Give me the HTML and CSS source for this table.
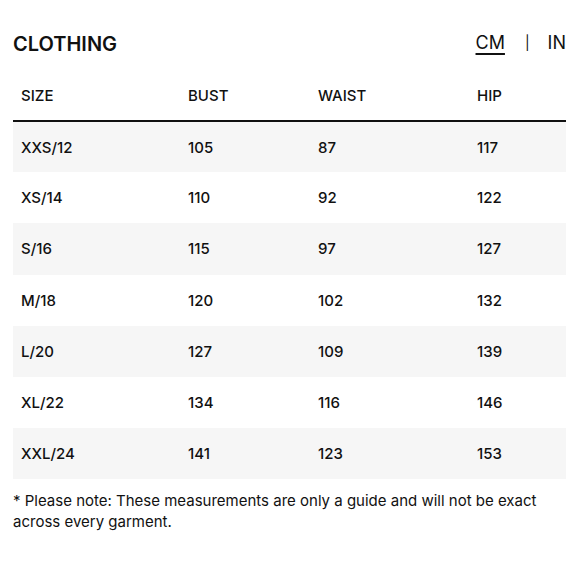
FILE: index.html
```html
<!DOCTYPE html>
<html lang="en">
<head>
<meta charset="utf-8">
<link rel="stylesheet" href="styles.css">
</head>
<body>
<div class="chart">
  <div class="top">
    <h2 class="title">CLOTHING</h2>
    <div class="units">
      <span class="unit active">CM</span>
      <span class="sep">|</span>
      <span class="unit">IN</span>
    </div>
  </div>
  <table class="sizes">
    <colgroup>
      <col class="c1"><col class="c2"><col class="c3"><col class="c4">
    </colgroup>
    <thead>
      <tr><th>SIZE</th><th>BUST</th><th>WAIST</th><th>HIP</th></tr>
    </thead>
    <tbody>
      <tr><td>XXS/12</td><td>105</td><td>87</td><td>117</td></tr>
      <tr><td>XS/14</td><td>110</td><td>92</td><td>122</td></tr>
      <tr><td>S/16</td><td>115</td><td>97</td><td>127</td></tr>
      <tr><td>M/18</td><td>120</td><td>102</td><td>132</td></tr>
      <tr><td>L/20</td><td>127</td><td>109</td><td>139</td></tr>
      <tr><td>XL/22</td><td>134</td><td>116</td><td>146</td></tr>
      <tr><td>XXL/24</td><td>141</td><td>123</td><td>153</td></tr>
    </tbody>
  </table>
  <p class="note">* Please note: These measurements are only a guide and will not be exact across every garment.</p>
</div>
</body>
</html>
```
FILE: styles.css
```css
html, body {
  margin: 0;
  padding: 0;
  background: #fff;
}
body {
  font-family: Inter, "Liberation Sans", sans-serif;
  color: #111;
}
.chart {
  width: 553px;
  padding: 0 14px 0 13px;
}
.top {
  display: flex;
  justify-content: space-between;
  align-items: center;
  height: 70px;
  padding-top: 18px;
  box-sizing: border-box;
}
.title {
  margin: 0;
  font-size: 20px;
  font-weight: 600;
  letter-spacing: 0;
}
.units {
  display: flex;
  align-items: center;
  font-size: 18px;
  font-weight: 400;
  margin-top: -4px;
}
.unit.active {
  text-decoration: underline;
  text-underline-offset: 4px;
  text-decoration-thickness: 1.5px;
}
.sep {
  font-size: 14px;
  margin: 0 18px 0 20px;
}
.sizes {
  width: 553px;
  table-layout: fixed;
  border-collapse: collapse;
  font-size: 15px;
}
.c1 { width: 167px; }
.c2 { width: 130px; }
.c3 { width: 159px; }
.c4 { width: 97px; }
.sizes th {
  text-align: left;
  font-weight: 500;
  height: 50px;
  padding: 0 8px;
  border-bottom: 2px solid #111;
  vertical-align: middle;
}
.sizes td {
  height: 51.2px;
  padding: 0 8px;
  font-weight: 500;
  vertical-align: middle;
  box-sizing: border-box;
}
.sizes tbody tr:nth-child(odd) {
  background: #f6f6f6;
}
.note {
  margin: 11px 0 0;
  font-size: 15px;
  line-height: 21px;
  font-weight: 400;
}
```
